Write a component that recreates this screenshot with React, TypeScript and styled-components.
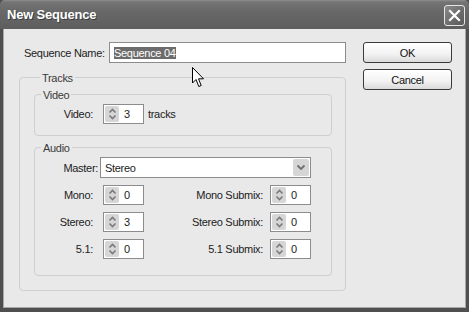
import React, { FC } from 'react';
import styled, { createGlobalStyle } from 'styled-components';

const GlobalStyle = createGlobalStyle`
    html, body {
        margin: 0;
        padding: 0;
        background: #4f4f4f;
    }
    * {
        box-sizing: border-box;
    }
`;

const Window = styled.div`
    width: 469px;
    height: 312px;
    display: flex;
    flex-direction: column;
    font-family: 'Liberation Sans', Arial, sans-serif;
    font-size: 11px;
    letter-spacing: -0.3px;
    color: #1c1c1c;
    background: #4f4f4f;
`;

const TitleBar = styled.div`
    height: 29px;
    flex: none;
    display: flex;
    align-items: center;
    justify-content: space-between;
    padding: 0 4px 0 7px;
    background: linear-gradient(#8e8e8e 0px, #747474 2px, #686868 40%, #5e5e5e 100%);
    border-radius: 5px 5px 0 0;
`;

const Title = styled.span`
    font-size: 13px;
    font-weight: bold;
    color: #ffffff;
    text-shadow: 1px 1px 0 #3c3c3c;
    letter-spacing: -0.2px;
`;

const CloseButton = styled.div`
    width: 21px;
    height: 21px;
    margin-top: 1px;
    display: flex;
    align-items: center;
    justify-content: center;
    border: 1px solid #e6e6e6;
    border-radius: 3px;
    background: linear-gradient(135deg, #8a8a8a, #6a6a6a 60%, #5a5a5a);
`;

const Frame = styled.div`
    flex: 1;
    display: flex;
    padding: 0 3px 4px 3px;
    background: #4f4f4f;
`;

const Body = styled.div`
    position: relative;
    flex: 1;
    display: flex;
    gap: 17px;
    padding: 13px 0 0 15px;
    background: #e9e9e9;
    border: 1px solid #a8a8a8;
    border-top: none;
`;

const MainColumn = styled.div`
    width: 327px;
    display: flex;
    flex-direction: column;
`;

const ButtonColumn = styled.div`
    width: 89px;
    display: flex;
    flex-direction: column;
    gap: 6px;
`;

const PushButton = styled.div`
    height: 21px;
    display: flex;
    align-items: center;
    justify-content: center;
    border: 1px solid #3a3a3a;
    border-radius: 3px;
    background: linear-gradient(#ffffff, #f2f2f2 60%, #dadada);
    color: #111;
`;

const NameRow = styled.div`
    height: 21px;
    display: flex;
    align-items: center;
`;

const NameLabel = styled.span`
    margin-left: 5px;
`;

const NameField = styled.div`
    width: 237px;
    height: 21px;
    margin-left: auto;
    display: flex;
    align-items: center;
    padding-left: 4px;
    border: 1px solid #8c8c8c;
    background: #ffffff;
`;

const Selected = styled.span`
    background: #6c6c6c;
    color: #ffffff;
    line-height: 12px;
`;

const Group = styled.div<{ $top: number; $pad: string }>`
    margin-top: ${(p) => p.$top}px;
    border: 1px solid #cfcfcf;
    border-radius: 4px;
    padding: ${(p) => p.$pad};
    display: flex;
    flex-direction: column;
`;

const Caption = styled.span<{ $after: number }>`
    align-self: flex-start;
    margin: -6px 0 ${(p) => p.$after}px 6px;
    padding: 0 2px;
    line-height: 13px;
    background: #e9e9e9;
    color: #3a3a3a;
`;

const Row = styled.div`
    display: flex;
    align-items: center;
`;

const RowLabel = styled.span<{ $width: number }>`
    width: ${(p) => p.$width}px;
    text-align: right;
    flex: none;
`;

const SideLabel = styled.span`
    flex: 1;
    text-align: right;
    margin-right: 7px;
`;

const SpinBox = styled.div<{ $gap: number }>`
    width: 41px;
    height: 20px;
    margin-left: ${(p) => p.$gap}px;
    display: flex;
    align-items: center;
    padding: 1px;
    border: 1px solid #8c8c8c;
    background: #ffffff;
    flex: none;
`;

const SpinArrows = styled.div`
    width: 14px;
    height: 16px;
    display: flex;
    align-items: center;
    justify-content: center;
    border-radius: 2px;
    background: #d6d6d6;
`;

const SpinValue = styled.span`
    margin-left: 5px;
`;

const Suffix = styled.span`
    margin-left: 4px;
`;

const SelectBox = styled.div`
    flex: 1;
    height: 21px;
    margin-left: 2px;
    display: flex;
    align-items: center;
    padding: 1px 1px 1px 4px;
    border: 1px solid #8c8c8c;
    background: #ffffff;
`;

const SelectText = styled.span`
    flex: 1;
`;

const SelectArrow = styled.div`
    width: 16px;
    height: 17px;
    display: flex;
    align-items: center;
    justify-content: center;
    border-radius: 2px;
    background: #d6d6d6;
`;

const AudioRows = styled.div`
    display: flex;
    flex-direction: column;
    gap: 7px;
`;

const Pointer = styled.svg`
    position: absolute;
    left: 188px;
    top: 38px;
`;

const Spin: FC<{ value: string; gap?: number }> = ({ value, gap = 0 }) => (
    <SpinBox $gap={gap}>
        <SpinArrows>
            <svg width="9" height="12" viewBox="0 0 9 12">
                <path d="M1.5 4.5 L4.5 1.5 L7.5 4.5" fill="none" stroke="#7a7a7a" strokeWidth="1.6" />
                <path d="M1.5 7.5 L4.5 10.5 L7.5 7.5" fill="none" stroke="#7a7a7a" strokeWidth="1.6" />
            </svg>
        </SpinArrows>
        <SpinValue>{value}</SpinValue>
    </SpinBox>
);

const audioRows = [
    { label: 'Mono:', value: '0', side: 'Mono Submix:', sideValue: '0' },
    { label: 'Stereo:', value: '3', side: 'Stereo Submix:', sideValue: '0' },
    { label: '5.1:', value: '0', side: '5.1 Submix:', sideValue: '0' },
];

const App: FC = () => (
    <>
        <GlobalStyle />
        <Window>
            <TitleBar>
                <Title>New Sequence</Title>
                <CloseButton>
                    <svg width="13" height="13" viewBox="0 0 13 13">
                        <path d="M2 2 L11 11 M11 2 L2 11" stroke="#ffffff" strokeWidth="2.2" strokeLinecap="square" />
                    </svg>
                </CloseButton>
            </TitleBar>
            <Frame>
                <Body>
                    <MainColumn>
                        <NameRow>
                            <NameLabel>Sequence Name:</NameLabel>
                            <NameField>
                                <Selected>Sequence 04</Selected>
                            </NameField>
                        </NameRow>
                        <Group $top={14} $pad="0 13px 14px 14px">
                            <Caption $after={9}>Tracks</Caption>
                            <Group $top={0} $pad="0 0 11px 0">
                                <Caption $after={2}>Video</Caption>
                                <Row>
                                    <RowLabel $width={58}>Video:</RowLabel>
                                    <Spin value="3" gap={10} />
                                    <Suffix>tracks</Suffix>
                                </Row>
                            </Group>
                            <Group $top={11} $pad="0 20px 16px 0">
                                <Caption $after={2}>Audio</Caption>
                                <AudioRows>
                                    <Row>
                                        <RowLabel $width={63}>Master:</RowLabel>
                                        <SelectBox>
                                            <SelectText>Stereo</SelectText>
                                            <SelectArrow>
                                                <svg width="10" height="7" viewBox="0 0 10 7">
                                                    <path d="M1.5 1.5 L5 5 L8.5 1.5" fill="none" stroke="#707070" strokeWidth="1.8" />
                                                </svg>
                                            </SelectArrow>
                                        </SelectBox>
                                    </Row>
                                    {audioRows.map((r) => (
                                        <Row key={r.label}>
                                            <RowLabel $width={58}>{r.label}</RowLabel>
                                            <Spin value={r.value} gap={10} />
                                            <SideLabel>{r.side}</SideLabel>
                                            <Spin value={r.sideValue} />
                                        </Row>
                                    ))}
                                </AudioRows>
                            </Group>
                        </Group>
                    </MainColumn>
                    <ButtonColumn>
                        <PushButton>OK</PushButton>
                        <PushButton>Cancel</PushButton>
                    </ButtonColumn>
                    <Pointer width="13" height="21" viewBox="0 0 13 21">
                        <path d="M0.5 0.5 L0.5 16 L4 12.5 L6.8 19.5 L9.2 18.5 L6.5 11.8 L11.5 11.8 Z" fill="#ffffff" stroke="#000000" strokeWidth="1" strokeLinejoin="round" />
                    </Pointer>
                </Body>
            </Frame>
        </Window>
    </>
);

export default App;
